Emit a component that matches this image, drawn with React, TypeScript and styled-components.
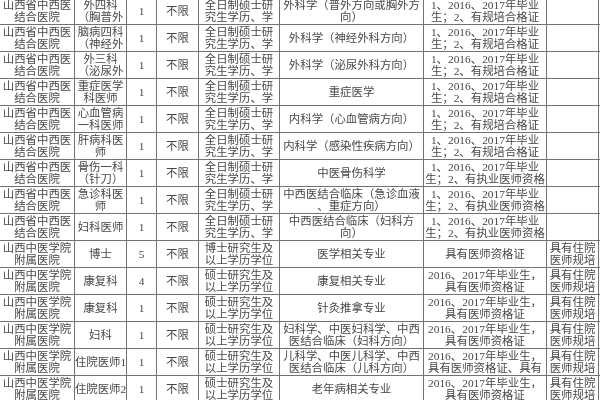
import styled, { createGlobalStyle } from "styled-components";

const GlobalStyle = createGlobalStyle`
  html, body {
    margin: 0;
    padding: 0;
    background: #ffffff;
    overflow: hidden;
  }
`;

const COLUMNS = "75px 52px 30px 42px 81px 144px 123px 52px";

const Page = styled.div`
  width: 600px;
  height: 400px;
  overflow: hidden;
  background: #ffffff;
`;

const Sheet = styled.div`
  margin-top: -2px;
  display: flex;
  flex-direction: column;
  font-family: "Liberation Serif", "Noto Sans CJK SC", serif;
  font-size: 11.4px;
  line-height: 12px;
  color: #474747;
  filter: blur(0.5px);
`;

const Row = styled.div`
  display: grid;
  grid-template-columns: ${COLUMNS};
  height: 27px;
  box-sizing: border-box;
  border-bottom: 1px solid #727272;
`;

const Cell = styled.div`
  display: flex;
  align-items: center;
  justify-content: center;
  overflow: hidden;
  white-space: pre;
  text-align: center;
  box-sizing: border-box;
  border-right: 1px solid #727272;
  padding: 0 1px;
`;

const HOSP_A = "山西省中西医\n结合医院";
const HOSP_B = "山西中医学院\n附属医院";
const EDU_A = "全日制硕士研\n究生学历、学";
const EDU_B = "硕士研究生及\n以上学历学位";
const REQ_GP = "1、2016、2017年毕业\n生；2、有规培合格证";
const REQ_LIC = "1、2016、2017年毕业\n生；2、有执业医师资格";
const REQ_GRAD = "2016、2017年毕业生，\n具有医师资格证";
const NOTE = "具有住院\n医师规培";

const rows: string[][] = [
  [HOSP_A, "外四科\n（胸普外", "1", "不限", EDU_A, "外科学（普外方向或胸外方\n向）", REQ_GP, ""],
  [HOSP_A, "脑病四科\n（神经外", "1", "不限", EDU_A, "外科学（神经外科方向）", REQ_GP, ""],
  [HOSP_A, "外三科\n（泌尿外", "1", "不限", EDU_A, "外科学（泌尿外科方向）", REQ_GP, ""],
  [HOSP_A, "重症医学\n科医师", "1", "不限", EDU_A, "重症医学", REQ_GP, ""],
  [HOSP_A, "心血管病\n一科医师", "1", "不限", EDU_A, "内科学（心血管病方向）", REQ_GP, ""],
  [HOSP_A, "肝病科医\n师", "1", "不限", EDU_A, "内科学（感染性疾病方向）", REQ_GP, ""],
  [HOSP_A, "骨伤一科\n（针刀）", "1", "不限", EDU_A, "中医骨伤科学", REQ_LIC, ""],
  [HOSP_A, "急诊科医\n师", "1", "不限", EDU_A, "中西医结合临床（急诊血液\n、重症方向）", REQ_LIC, ""],
  [HOSP_A, "妇科医师", "1", "不限", EDU_A, "中西医结合临床（妇科方\n向）", REQ_LIC, ""],
  [HOSP_B, "博士", "5", "不限", "博士研究生及\n以上学历学位", "医学相关专业", "具有医师资格证", NOTE],
  [HOSP_B, "康复科", "4", "不限", EDU_B, "康复相关专业", REQ_GRAD, NOTE],
  [HOSP_B, "康复科", "1", "不限", EDU_B, "针灸推拿专业", REQ_GRAD, NOTE],
  [HOSP_B, "妇科", "1", "不限", EDU_B, "妇科学、中医妇科学、中西\n医结合临床（妇科方向）", REQ_GRAD, NOTE],
  [HOSP_B, "住院医师1", "1", "不限", EDU_B, "儿科学、中医儿科学、中西\n医结合临床（儿科方向）", "2016、2017年毕业生，\n具有医师资格证、具有", NOTE],
  [HOSP_B, "住院医师2", "1", "不限", EDU_B, "老年病相关专业", REQ_GRAD, NOTE],
];

export default function App() {
  return (
    <Page>
      <GlobalStyle />
      <Sheet>
        {rows.map((row, i) => (
          <Row key={i}>
            {row.map((text, j) => (
              <Cell key={j}>{text}</Cell>
            ))}
          </Row>
        ))}
      </Sheet>
    </Page>
  );
}
